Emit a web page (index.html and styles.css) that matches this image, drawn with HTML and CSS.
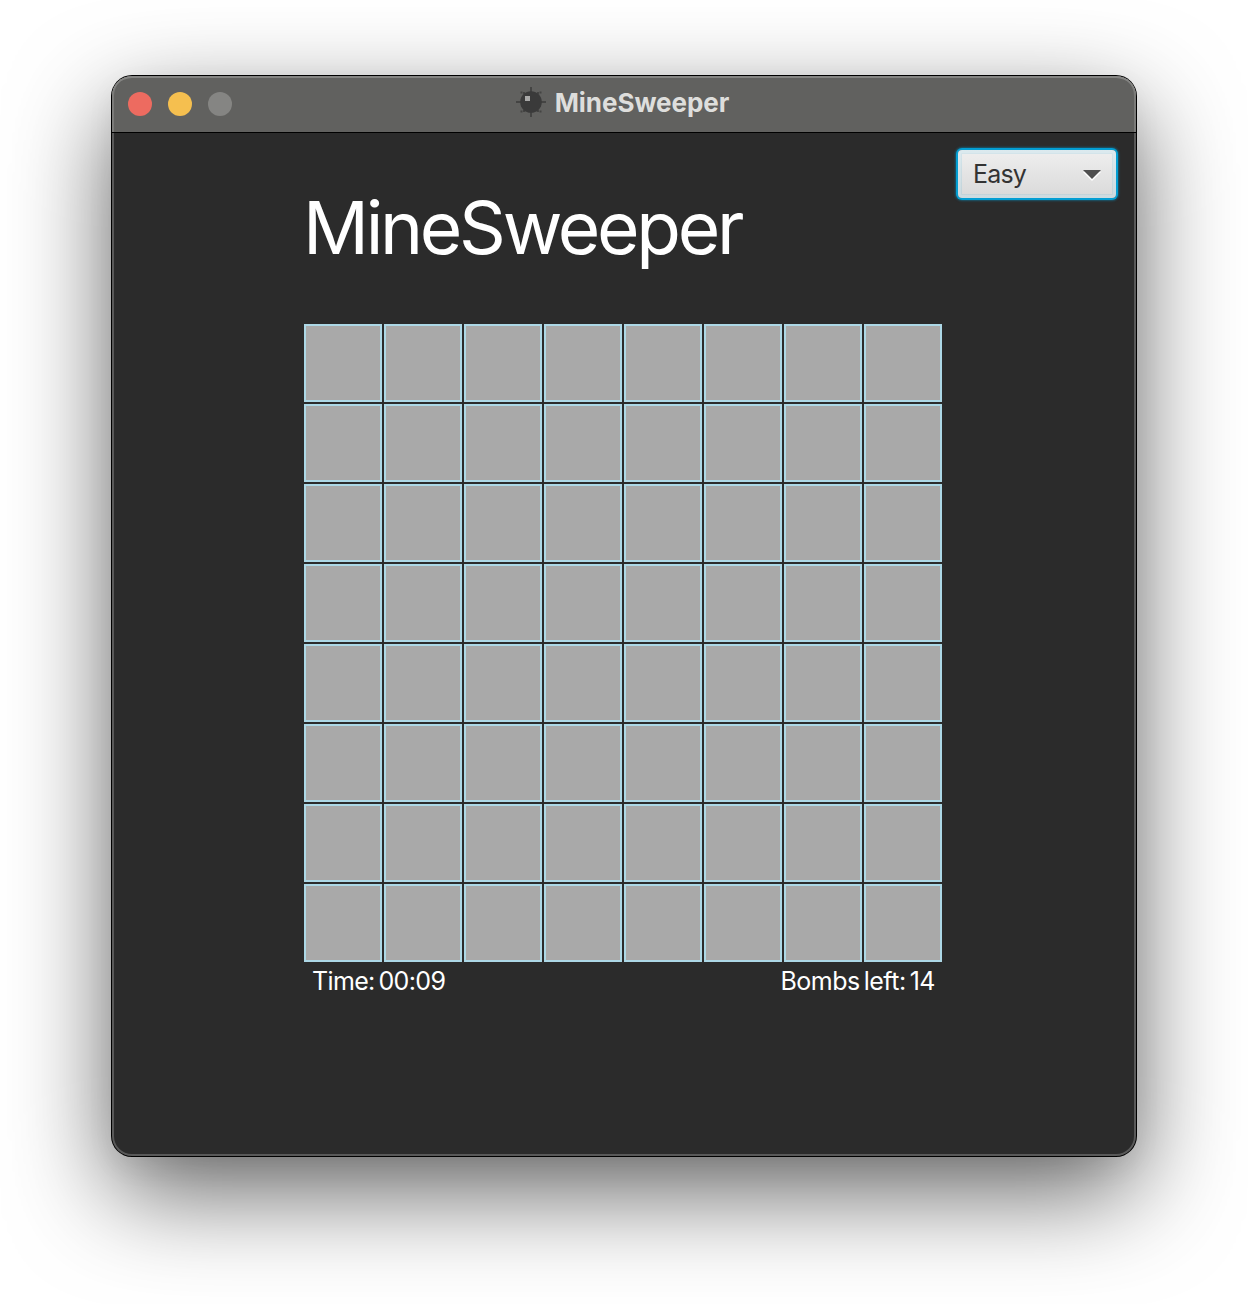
FILE: index.html
```html
<!DOCTYPE html>
<html lang="en">
<head>
<meta charset="utf-8">
<title>MineSweeper</title>
<link rel="stylesheet" href="styles.css">
</head>
<body>
<main class="window">
  <header class="titlebar">
    <div class="lights"><span class="light close"></span><span class="light minimize"></span><span class="light disabled"></span></div>
    <div class="caption">
      <svg class="mine" width="30" height="30" viewBox="0 0 30 30" aria-hidden="true">
        <path fill="#444443" d="M14 0h2v30h-2zM0 14h30v2H0zM4.5 4.5h2v2h-2zM23.5 4.5h2v2h-2zM4.5 23.5h2v2h-2zM23.5 23.5h2v2h-2zM7 5h2v2H7zM21 5h2v2h-2zM7 23h2v2H7zM21 23h2v2h-2z"/>
        <circle cx="15" cy="15" r="10.8" fill="#3a3a3a"/>
        <path fill="#a9a9a8" d="M9 9h5v5H9z"/>
      </svg>
      <span class="caption-text">MineSweeper</span>
    </div>
  </header>
  <section class="content">
    <div class="select"><span class="select-text">Easy</span>
      <svg class="arrow" width="18" height="11" viewBox="0 0 18 11" aria-hidden="true"><path fill="#fff" d="M0 2h18L9 11z"/><path fill="#505050" d="M0 0h18L9 9z"/></svg>
    </div>
    <h1 class="title">MineSweeper</h1>
    <div class="board" id="board"></div>
    <div class="status"><span class="time">Time: 00:09</span><span class="bombs">Bombs left: 14</span></div>
  </section>
</main>
<script src="board.js"></script>
</body>
</html>
```
FILE: styles.css
```css
* { box-sizing: border-box; }
body {
  margin: 0;
  height: 1304px;
  padding: 76px 112px;
  overflow: hidden;
  background: #fff;
  font-family: Inter, sans-serif;
}
.window {
  position: relative;
  width: 1024px;
  height: 1080px;
  border-radius: 20px;
  background: #2b2b2b;
  box-shadow: 0 0 0 1px #000, 0 10px 30px rgba(0, 0, 0, .05), 0 36px 100px rgba(0, 0, 0, .61);
}
/* Light rim drawn over the edge of the window */
.window::after {
  content: "";
  position: absolute;
  inset: 0;
  border-radius: 20px;
  box-shadow: inset 0 0 0 2px rgba(255, 255, 255, .22);
  clip-path: inset(57px 0 0 0);
  pointer-events: none;
}
.titlebar {
  display: grid;
  grid-template-columns: 120px 1fr 120px;
  height: 57px;
  border-bottom: 1px solid #000;
  border-radius: 20px 20px 0 0;
  background: #61615f;
  box-shadow: inset 0 2px 0 #858583, inset 2px 0 0 #7b7b79, inset -2px 0 0 #7b7b79;
}
.lights { display: flex; gap: 16px; padding: 16px 0 0 16px; }
.light { width: 24px; height: 24px; border-radius: 50%; }
.close { background: #ed6b60; }
.minimize { background: #f5bf4f; }
.disabled { background: #858583; }
.caption { display: flex; justify-content: center; padding-top: 11px; gap: 9px; margin-left: -3px; }
.caption-text {
  color: #dededc;
  font-size: 26px;
  font-weight: 700;
  line-height: 32px;
  letter-spacing: -.05px;
}
.content { display: flex; flex-direction: column; height: 1023px; }
.select {
  display: flex;
  align-items: center;
  justify-content: space-between;
  align-self: flex-end;
  width: 158px;
  height: 48px;
  margin: 17px 20px 0 0;
  padding: 0 15px 0 15px;
  border-radius: 4px;
  background: linear-gradient(#efefef, #d9d9d9);
  box-shadow: 0 0 0 2px #039ed3, 0 0 2px 3px rgba(3, 158, 211, .4), inset 0 0 0 3px rgba(255, 255, 255, .2), inset 0 0 0 4px rgba(3, 158, 211, .11);
}
.select-text { color: #333; font-size: 25px; letter-spacing: -.8px; }
.arrow { margin-top: 3px; }
.title {
  width: 638px;
  height: 90px;
  margin: -15px 0 0 191px;
  color: #fff;
  font-size: 73px;
  font-weight: 400;
  line-height: 90px;
  letter-spacing: -3.3px;
}
.board {
  display: grid;
  grid-template-columns: repeat(8, 78px);
  grid-auto-rows: 78px;
  gap: 2px;
  margin: 51px 0 0 192px;
}
.cell { border: 2px solid #add8e6; background: #a9a9a9; }
.status {
  display: flex;
  justify-content: space-between;
  width: 638px;
  margin-left: 192px;
  padding: 3px 7px 0 8px;
  color: #fff;
  font-size: 25px;
  line-height: 32px;
  letter-spacing: -.65px;
  word-spacing: -2.5px;
}
.bombs { letter-spacing: -.5px; }
```
FILE: board.js
```js
const board = document.getElementById("board");
for (let i = 0; i < 64; i++) {
  const cell = document.createElement("div");
  cell.className = "cell";
  board.append(cell);
}
```
